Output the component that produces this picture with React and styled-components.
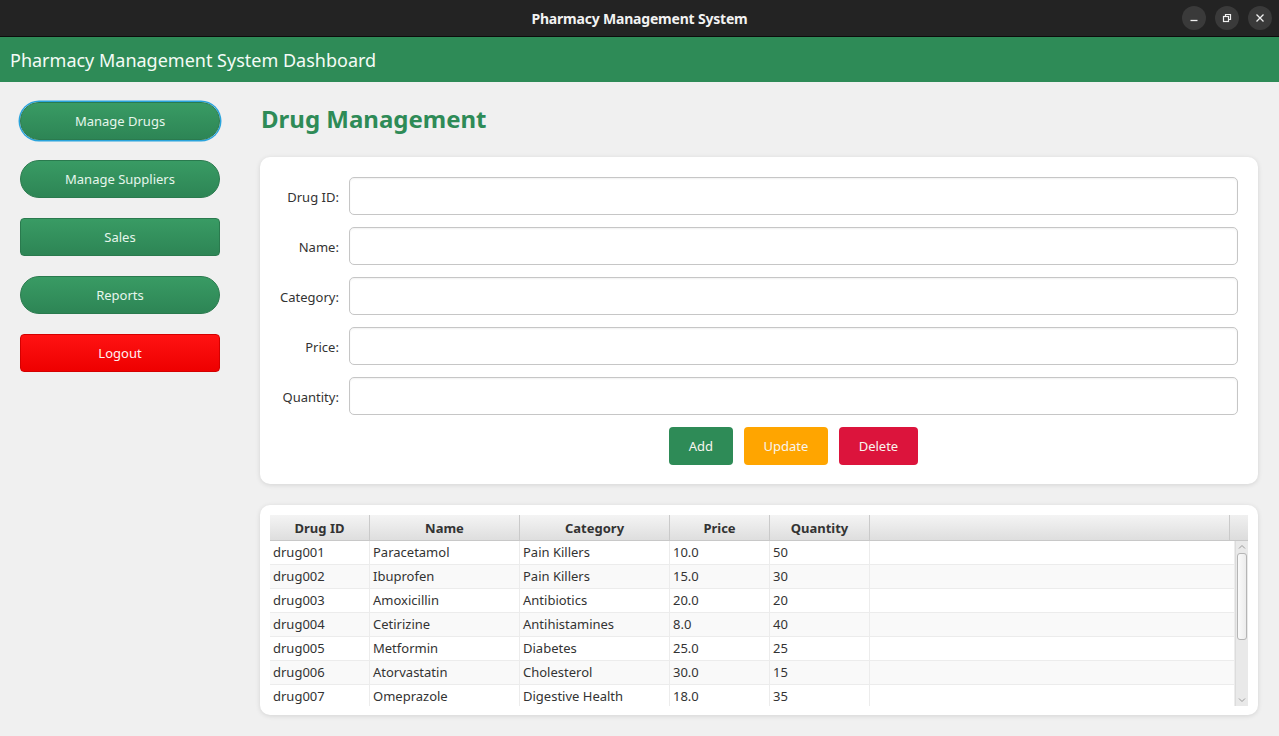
import React from "react";
import styled, { createGlobalStyle } from "styled-components";

const Global = createGlobalStyle`
  html, body { margin: 0; padding: 0; }
  body {
    background: #f0f0f0;
    font-family: "Noto Sans", "Open Sans", sans-serif;
    color: #333;
  }
  * { box-sizing: border-box; }
`;

const Window = styled.div`
  width: 1279px;
  height: 736px;
  display: flex;
  flex-direction: column;
  background: #f0f0f0;
  overflow: hidden;
`;

const TitleBar = styled.div`
  height: 37px;
  flex: none;
  background: #232323;
  border-bottom: 1px solid #0c0c0c;
  display: grid;
  grid-template-columns: 1fr auto 1fr;
  align-items: center;
`;

const WinTitle = styled.div`
  grid-column: 2;
  color: #f2f2f2;
  font-weight: 700;
  font-size: 14px;
  letter-spacing: -0.2px;
`;

const Controls = styled.div`
  grid-column: 3;
  justify-self: end;
  display: flex;
  gap: 9px;
  padding-right: 7px;
`;

const CtrlBtn = styled.div`
  width: 24px;
  height: 24px;
  border-radius: 50%;
  background: #3a3a3a;
  display: flex;
  align-items: center;
  justify-content: center;
`;

const AppHeader = styled.div`
  height: 45px;
  flex: none;
  background: #2e8b57;
  color: #f4fbf6;
  font-size: 18px;
  display: flex;
  align-items: center;
  padding-left: 10px;
`;

const Body = styled.div`
  flex: 1;
  display: flex;
  gap: 40px;
  padding: 20px 21px 21px 20px;
  min-height: 0;
`;

const Sidebar = styled.div`
  width: 200px;
  flex: none;
  display: flex;
  flex-direction: column;
  gap: 20px;
`;

const NavButton = styled.div`
  height: 38px;
  display: flex;
  align-items: center;
  justify-content: center;
  font-size: 13px;
  color: ${(p) => (p.$danger ? "#fff2f2" : "#e6f6ec")};
  border-radius: ${(p) => (p.$square ? "4px" : "19px")};
  background: ${(p) =>
    p.$danger
      ? "linear-gradient(#ff1212, #ee0000)"
      : "linear-gradient(#399b64, #2d8555)"};
  border: 1px solid ${(p) => (p.$danger ? "#d40000" : "#2a7a4e")};
  box-shadow: ${(p) => (p.$focused ? "0 0 0 1.5px #2aa4dc" : "none")};
`;

const Main = styled.div`
  flex: 1;
  display: flex;
  flex-direction: column;
  min-width: 0;
`;

const PageTitle = styled.h1`
  margin: 1px 0 22px 1px;
  height: 32px;
  line-height: 32px;
  font-size: 24px;
  font-weight: 700;
  color: #2e8b57;
`;

const Card = styled.div`
  background: #fff;
  border-radius: 10px;
  box-shadow: 0 1px 5px rgba(0, 0, 0, 0.12);
`;

const FormCard = styled(Card)`
  padding: 20px 20px 19px 20px;
  display: grid;
  grid-template-columns: auto 1fr;
  column-gap: 10px;
  row-gap: 12px;
  align-items: center;
`;

const Label = styled.label`
  justify-self: end;
  font-size: 13px;
  color: #333;
  padding-top: 1px;
`;

const Input = styled.input`
  height: 38px;
  width: 100%;
  border: 1px solid #c6c6c6;
  border-radius: 5px;
  background: #fff;
  box-shadow: inset 0 1px 2px rgba(0, 0, 0, 0.06);
  outline: none;
  font: inherit;
`;

const ButtonRow = styled.div`
  grid-column: 2;
  display: flex;
  justify-content: center;
  gap: 11px;
`;

const ActionButton = styled.div`
  height: 38px;
  width: ${(p) => p.$w}px;
  border-radius: 4px;
  background: ${(p) => p.$bg};
  color: #f8f4ee;
  font-size: 13px;
  display: flex;
  align-items: center;
  justify-content: center;
`;

const TableCard = styled(Card)`
  margin-top: 21px;
  padding: 10px 10px 9px 10px;
`;

const Table = styled.div`
  display: flex;
  flex-direction: column;
  height: 191px;
`;

const HeadRow = styled.div`
  display: flex;
  height: 26px;
  flex: none;
  background: linear-gradient(#f4f4f4, #dedede);
  border-bottom: 1px solid #c8c8c8;
`;

const HeadCell = styled.div`
  width: ${(p) => p.$w}px;
  flex: ${(p) => (p.$fill ? "1" : "none")};
  border-right: 1px solid #cacaca;
  display: flex;
  align-items: center;
  justify-content: center;
  font-size: 13px;
  font-weight: 700;
  color: #333;
`;

const Corner = styled.div`
  width: 18px;
  flex: none;
  background: linear-gradient(#f0f0f0, #dcdcdc);
`;

const BodyArea = styled.div`
  flex: 1;
  display: flex;
  min-height: 0;
`;

const Rows = styled.div`
  flex: 1;
  overflow: hidden;
`;

const Row = styled.div`
  display: flex;
  height: 24px;
  background: ${(p) => (p.$alt ? "#f9f9f9" : "#fff")};
  border-bottom: 1px solid #ececec;
`;

const Cell = styled.div`
  width: ${(p) => p.$w}px;
  flex: ${(p) => (p.$fill ? "1" : "none")};
  border-right: 1px solid #ececec;
  padding-left: 3px;
  padding-bottom: 1px;
  display: flex;
  align-items: center;
  font-size: 13px;
  color: #333;
  white-space: nowrap;
`;

const ScrollTrack = styled.div`
  width: 13px;
  flex: none;
  background: #e9e9e9;
  border-left: 1px solid #dcdcdc;
  display: flex;
  flex-direction: column;
  align-items: center;
`;

const Arrow = styled.div`
  height: 12px;
  flex: none;
  display: flex;
  align-items: center;
  justify-content: center;
`;

const Thumb = styled.div`
  width: 10px;
  height: 87px;
  border: 1px solid #b5b5b5;
  border-radius: 3px;
  background: linear-gradient(90deg, #fafafa, #ececec);
`;

const Spacer = styled.div`
  flex: 1;
`;

const cols = [
  { key: "id", title: "Drug ID", w: 100 },
  { key: "name", title: "Name", w: 150 },
  { key: "cat", title: "Category", w: 150 },
  { key: "price", title: "Price", w: 100 },
  { key: "qty", title: "Quantity", w: 100 },
];

const data = [
  ["drug001", "Paracetamol", "Pain Killers", "10.0", "50"],
  ["drug002", "Ibuprofen", "Pain Killers", "15.0", "30"],
  ["drug003", "Amoxicillin", "Antibiotics", "20.0", "20"],
  ["drug004", "Cetirizine", "Antihistamines", "8.0", "40"],
  ["drug005", "Metformin", "Diabetes", "25.0", "25"],
  ["drug006", "Atorvastatin", "Cholesterol", "30.0", "15"],
  ["drug007", "Omeprazole", "Digestive Health", "18.0", "35"],
];

const fields = ["Drug ID:", "Name:", "Category:", "Price:", "Quantity:"];

export default function App() {
  return (
    <>
      <Global />
      <Window>
        <TitleBar>
          <WinTitle>Pharmacy Management System</WinTitle>
          <Controls>
            <CtrlBtn>
              <svg width="10" height="10" viewBox="0 0 10 10">
                <path d="M1.5 7.5h7" stroke="#f0f0f0" strokeWidth="1.3" />
              </svg>
            </CtrlBtn>
            <CtrlBtn>
              <svg width="10" height="10" viewBox="0 0 10 10">
                <rect x="1.5" y="3.5" width="5" height="5" fill="none" stroke="#f0f0f0" strokeWidth="1.2" />
                <path d="M3.5 3.5V1.5h5v5h-2" fill="none" stroke="#f0f0f0" strokeWidth="1.2" />
              </svg>
            </CtrlBtn>
            <CtrlBtn>
              <svg width="10" height="10" viewBox="0 0 10 10">
                <path d="M1.5 1.5l7 7M8.5 1.5l-7 7" stroke="#f0f0f0" strokeWidth="1.3" />
              </svg>
            </CtrlBtn>
          </Controls>
        </TitleBar>
        <AppHeader>Pharmacy Management System Dashboard</AppHeader>
        <Body>
          <Sidebar>
            <NavButton $focused>Manage Drugs</NavButton>
            <NavButton>Manage Suppliers</NavButton>
            <NavButton $square>Sales</NavButton>
            <NavButton>Reports</NavButton>
            <NavButton $square $danger>Logout</NavButton>
          </Sidebar>
          <Main>
            <PageTitle>Drug Management</PageTitle>
            <FormCard>
              {fields.map((f) => (
                <React.Fragment key={f}>
                  <Label>{f}</Label>
                  <Input />
                </React.Fragment>
              ))}
              <ButtonRow>
                <ActionButton $w={64} $bg="#2e8b57">Add</ActionButton>
                <ActionButton $w={84} $bg="#ffa500">Update</ActionButton>
                <ActionButton $w={79} $bg="#dc143c">Delete</ActionButton>
              </ButtonRow>
            </FormCard>
            <TableCard>
              <Table>
                <HeadRow>
                  {cols.map((c) => (
                    <HeadCell key={c.key} $w={c.w}>{c.title}</HeadCell>
                  ))}
                  <HeadCell $fill />
                  <Corner />
                </HeadRow>
                <BodyArea>
                  <Rows>
                    {data.map((r, i) => (
                      <Row key={r[0]} $alt={i % 2 === 1}>
                        {r.map((v, j) => (
                          <Cell key={j} $w={cols[j].w}>{v}</Cell>
                        ))}
                        <Cell $fill />
                      </Row>
                    ))}
                  </Rows>
                  <ScrollTrack>
                    <Arrow>
                      <svg width="8" height="6" viewBox="0 0 8 6">
                        <path d="M1 4.5L4 1.5L7 4.5" fill="none" stroke="#9a9a9a" strokeWidth="1" />
                      </svg>
                    </Arrow>
                    <Thumb />
                    <Spacer />
                    <Arrow>
                      <svg width="8" height="6" viewBox="0 0 8 6">
                        <path d="M1 1.5L4 4.5L7 1.5" fill="none" stroke="#9a9a9a" strokeWidth="1" />
                      </svg>
                    </Arrow>
                  </ScrollTrack>
                </BodyArea>
              </Table>
            </TableCard>
          </Main>
        </Body>
      </Window>
    </>
  );
}
